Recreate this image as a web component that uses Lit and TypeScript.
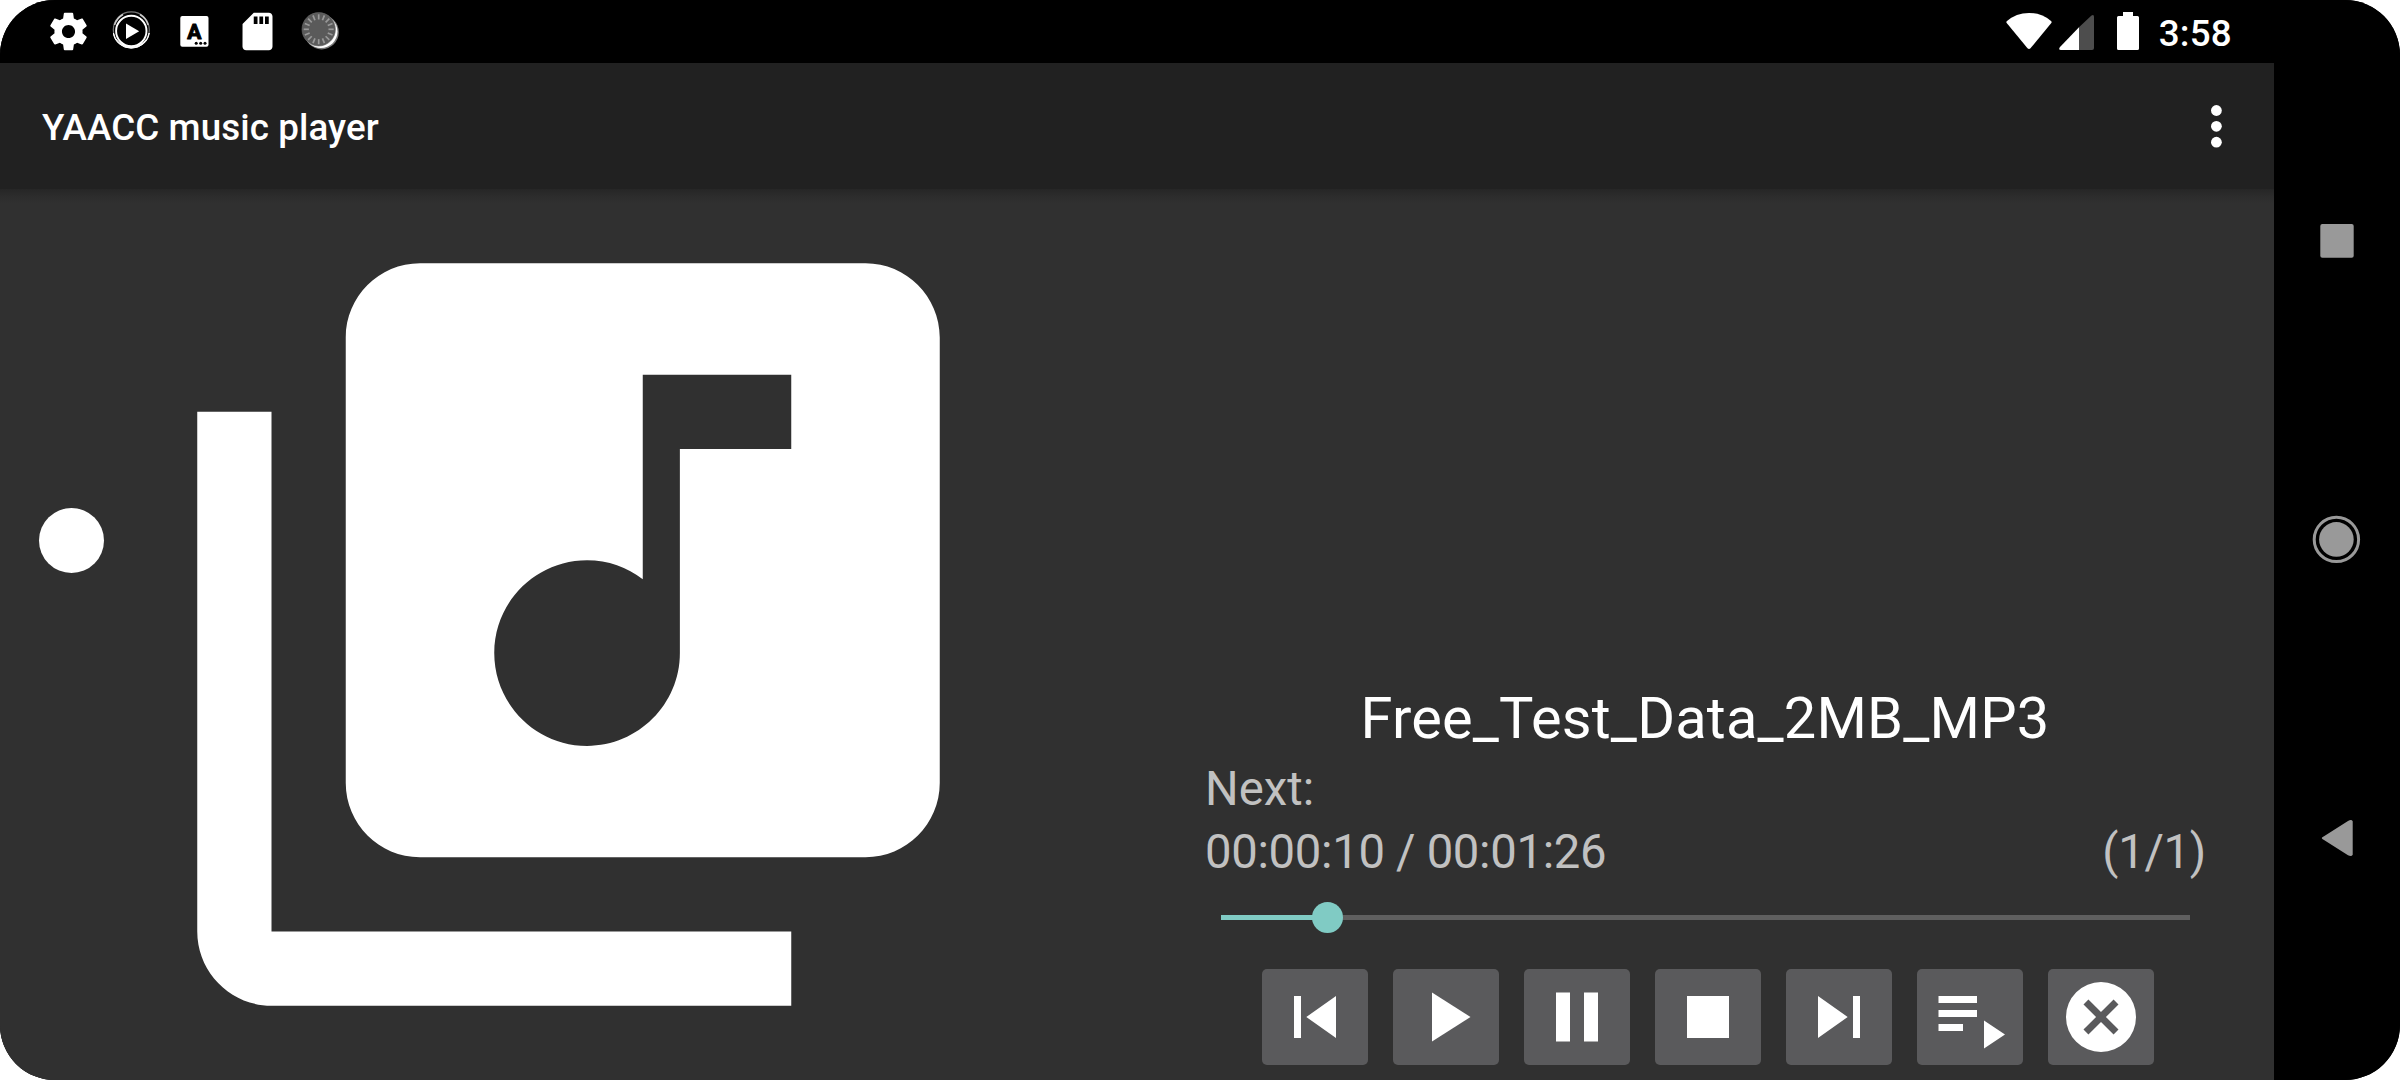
import { LitElement, html, css, svg } from "lit";
import { customElement, property } from "lit/decorators.js";

@customElement("status-bar")
class StatusBar extends LitElement {
  static styles = css`
    :host { display: flex; align-items: center; height: 63px; background: #000; box-sizing: border-box; padding: 0 42px 0 46px; }
    .notes { display: flex; gap: 18px; flex: 1; }
    svg { display: block; flex: none; }
    .system { display: flex; align-items: center; }
    .wifi { margin-right: 7px; }
    .cell { margin-right: 22px; }
    .battery { margin-right: 20px; }
    .clock { font: 500 36.75px/63px Roboto, sans-serif; letter-spacing: .25px; color: #fff; height: 63px; padding-top: 2px; box-sizing: border-box; }
  `;
  render() {
    const ticks = Array.from({ length: 16 }, (_, i) => i * 22.5);
    return html`
      <div class="notes">
        <svg width="45" height="45" viewBox="0 0 24 24" fill="#fff"><path d="M19.43 12.98c.04-.32.07-.64.07-.98s-.03-.66-.07-.98l2.11-1.65c.19-.15.24-.42.12-.64l-2-3.46c-.12-.22-.39-.3-.61-.22l-2.49 1c-.52-.4-1.08-.73-1.69-.98l-.38-2.65C14.46 2.18 14.25 2 14 2h-4c-.25 0-.46.18-.49.42l-.38 2.65c-.61.25-1.17.59-1.69.98l-2.49-1c-.23-.09-.49 0-.61.22l-2 3.46c-.13.22-.07.49.12.64l2.11 1.65c-.04.32-.07.65-.07.98s.03.66.07.98l-2.11 1.65c-.19.15-.24.42-.12.64l2 3.46c.12.22.39.3.61.22l2.49-1c.52.4 1.08.73 1.69.98l.38 2.65c.03.24.24.42.49.42h4c.25 0 .46-.18.49-.42l.38-2.65c.61-.25 1.17-.59 1.69-.98l2.49 1c.23.09.49 0 .61-.22l2-3.46c.12-.22.07-.49-.12-.64l-2.11-1.65zM12 15.5c-1.93 0-3.5-1.57-3.5-3.5s1.57-3.5 3.5-3.5 3.5 1.57 3.5 3.5-1.57 3.5-3.5 3.5z"/></svg>
        <svg width="45" height="45" viewBox="0 0 45 45" fill="none">
          <circle cx="22.300" cy="20.800" r="18" stroke="#777" stroke-width="1.200"/>
          <circle cx="22.300" cy="22" r="15.200" stroke="#fff" stroke-width="1.900"/>
          <path d="M4.400 24a18 17 0 0 0 35.800 0a18 15.200 0 0 1-35.800 0z" fill="#fff" stroke="#fff" stroke-width="1"/>
          <path d="M5.500 16A18 18 0 0 1 14 5.500M39.200 16A18 18 0 0 0 31 5.500" stroke="#ccc" stroke-width="1.500"/>
          <path d="M17 14.500v15.500l13.200-7.800z" fill="#fff"/>
        </svg>
        <svg width="45" height="45" viewBox="0 0 45 45">
          <rect x="8.300" y="7" width="28.200" height="30.700" rx="2" fill="#fff"/>
          <text x="22.300" y="29.500" text-anchor="middle" font-family="Roboto, sans-serif" font-size="21" font-weight="700" fill="#000" stroke="#000" stroke-width="1" stroke-linejoin="round">A</text>
          <g fill="#000"><circle cx="24.200" cy="34.200" r="1.500"/><circle cx="28.700" cy="34.200" r="1.500"/><circle cx="33" cy="34.200" r="1.500"/></g>
        </svg>
        <svg width="45" height="45" viewBox="0 0 24 24" fill="#fff"><path d="M18 2h-8L4.020 8 4 20c0 1.100.9 2 2 2h12c1.100 0 2-.9 2-2V4c0-1.100-.9-2-2-2zm-6 6h-2V4h2v4zm3 0h-2V4h2v4zm3 0h-2V4h2v4z"/></svg>
        <svg width="45" height="45" viewBox="0 0 45 45">
          <circle cx="23.600" cy="23.200" r="17.200" fill="#777"/>
          <circle cx="22.900" cy="22.500" r="16.600" fill="#fff"/>
          <circle cx="20.700" cy="20.300" r="16.700" fill="#5a5a5a" stroke="#6a6a6a" stroke-width=".6"/>
          ${ticks.map((a) => svg`<path d="M20.700 5.300v5.200" stroke="#999" stroke-width="1.700" transform="rotate(${a} 20.700 20.300)"/>`)}
        </svg>
      </div>
      <div class="system">
        <svg class="wifi" width="46" height="45" viewBox="0 0 46 45"><path d="M.7 12.300Q10 4 23 4t22.300 8.300q.6.8 0 1.700L24.500 39.200q-1.500 1.600-3 0L.7 14q-.6-.9 0-1.700z" fill="#fff"/></svg>
        <svg class="cell" width="36" height="45" viewBox="0 0 36 45"><path d="M20 18.200V41H2Q-1 41 1 38z" fill="#fff"/><path d="M20 18.200 32.500 6.500Q35 5 35 8v31q0 2-2 2H20z" fill="#4d4d4d"/></svg>
        <svg class="battery" width="22" height="45" viewBox="0 0 22 45"><path d="M6 3h10v4h4.500q1.500 0 1.500 1.500v31q0 1.500-1.500 1.500h-19Q0 41 0 39.500v-31Q0 7 1.500 7H6z" fill="#fff"/></svg>
        <span class="clock">3:58</span>
      </div>`;
  }
}

@customElement("nav-rail")
class NavRail extends LitElement {
  static styles = css`
    :host { display: flex; flex-direction: column; align-items: center; justify-content: space-between; width: 126px; box-sizing: border-box; padding: 216px 0 217px; background: #000; }
    svg { display: block; }
  `;
  render() {
    return html`
      <svg width="50" height="50" viewBox="0 0 50 50"><rect x="8.300" y="8" width="33.400" height="33.800" rx="2" fill="#999"/></svg>
      <svg width="50" height="50" viewBox="0 0 50 50"><circle cx="24.400" cy="24.400" r="22.200" fill="none" stroke="#999" stroke-width="3"/><circle cx="24.400" cy="24.400" r="17.300" fill="#999"/></svg>
      <svg width="50" height="50" viewBox="0 0 50 50"><path d="M12 23.300 36 8q3.500-2 4.700.2v33.500q-1.200 2.200-4.700.5L12 27.100q-4.500-2 0-3.800z" fill="#999"/></svg>`;
  }
}

const CONTROLS = [
  { name: "Previous", art: svg`<path d="M32 27h7v42h-7zM74 27v42L44.300 48z"/>` },
  { name: "Play", art: svg`<path d="M39 23.500v49L77.500 48z"/>` },
  { name: "Pause", art: svg`<path d="M32 23.500h14v49H32zM60 23.500h14v49H60z"/>` },
  { name: "Stop", art: svg`<path d="M32 27h42v42H32z"/>` },
  { name: "Next", art: svg`<path d="M32 27v42l29.700-21zM67 27h7v42h-7z"/>` },
  { name: "Playlist", art: svg`<path d="M21.500 27H60v7H21.500zM21.500 41H60v7H21.500zM21.500 55H46v7H21.500zM67 51.500v28l21-14z"/>` },
  { name: "Exit", art: svg`<path fill-rule="evenodd" d="M53 13a35 35 0 1 0 0 70a35 35 0 1 0 0-70zM70.500 60.570 65.570 65.500 53 52.930 40.430 65.500 35.500 60.570 48.070 48 35.500 35.430 40.430 30.500 53 43.070 65.570 30.500 70.500 35.430 57.930 48z"/>` },
];

@customElement("player-panel")
class PlayerPanel extends LitElement {
  @property({ type: Number }) progress = 11;
  static styles = css`
    :host { display: flex; flex-direction: column; justify-content: flex-end; width: 1000px; box-sizing: border-box; padding-bottom: 15px; font-family: Roboto, sans-serif; color: #c1c1c1; font-size: 47.250px; line-height: 63px; }
    .title { color: #fff; font-size: 57.750px; line-height: 79px; text-align: center; letter-spacing: .2px; }
    .row { display: flex; justify-content: space-between; letter-spacing: -.32px; margin-right: -1px; }
    .seek { display: flex; align-items: center; height: 32px; margin: 18px 15px 35.500px 16px; }
    .done { height: 5px; background: #80cbc4; }
    .thumb { flex: none; width: 31px; height: 31px; border-radius: 50%; background: #80cbc4; margin: 0 -15.500px; z-index: 1; }
    .rest { flex: 1; height: 5px; background: #5f5f5f; }
    .buttons { display: flex; gap: 25px; justify-content: center; margin-left: 6px; }
    .btn { width: 106px; height: 96px; border: 0; padding: 0; border-radius: 5px; background: #5a5a5c; fill: #fff; }
    svg { display: block; }
  `;
  render() {
    return html`
      <div class="title">Free_Test_Data_2MB_MP3</div>
      <div>Next:</div>
      <div class="row"><span>00:00:10 / 00:01:26</span><span>(1/1)</span></div>
      <div class="seek"><div class="done" style="width:${this.progress}%"></div><div class="thumb"></div><div class="rest"></div></div>
      <div class="buttons">
        ${CONTROLS.map((c) => html`<button class="btn" aria-label=${c.name}><svg width="106" height="96" viewBox="0 0 106 96">${c.art}</svg></button>`)}
      </div>`;
  }
}

@customElement("app-root")
class AppRoot extends LitElement {
  static styles = css`
    :host { display: block; width: 2400px; height: 1080px; background: #fff; overflow: hidden; }
    .screen { display: flex; height: 1080px; background: #000; border-radius: 55px; overflow: hidden; }
    .main { width: 2274px; display: flex; flex-direction: column; background: #303030; }
    .bar { height: 126px; flex: none; background: #212121; display: flex; align-items: center; justify-content: space-between; padding: 0 42px; box-sizing: border-box; }
    .name { font: 500 36.750px/126px Roboto, sans-serif; letter-spacing: .1px; color: #fff; padding-top: 3px; }
    .content { flex: 1; display: flex; background: linear-gradient(#262626, #2c2c2c 7px, #303030 14px); }
    .dot { width: 65px; height: 65px; border-radius: 50%; background: #fff; margin: 319px 19px 0 39px; flex: none; }
    .art { display: block; flex: none; margin-right: 191px; }
    svg { display: block; }
  `;
  render() {
    return html`
      <div class="screen">
        <div class="main">
          <status-bar></status-bar>
          <div class="bar">
            <span class="name">YAACC music player</span>
            <svg width="32" height="48" viewBox="0 0 32 48" fill="#fff"><circle cx="16.400" cy="8.500" r="5.400"/><circle cx="16.400" cy="24.300" r="5.400"/><circle cx="16.400" cy="40.200" r="5.400"/></svg>
          </div>
          <div class="content">
            <div class="dot"></div>
            <svg class="art" width="891" height="891" viewBox="0 0 24 24" fill="#fff"><path d="M20 2H8c-1.100 0-2 .9-2 2v12c0 1.100.9 2 2 2h12c1.100 0 2-.9 2-2V4c0-1.100-.9-2-2-2zm-2 5h-3v5.500c0 1.380-1.120 2.500-2.500 2.500S10 13.880 10 12.500s1.120-2.500 2.500-2.500c.57 0 1.080.19 1.500.51V5h4v2zM4 6H2v14c0 1.100.9 2 2 2h14v-2H4V6z"/></svg>
            <player-panel></player-panel>
          </div>
        </div>
        <nav-rail></nav-rail>
      </div>`;
  }
}
